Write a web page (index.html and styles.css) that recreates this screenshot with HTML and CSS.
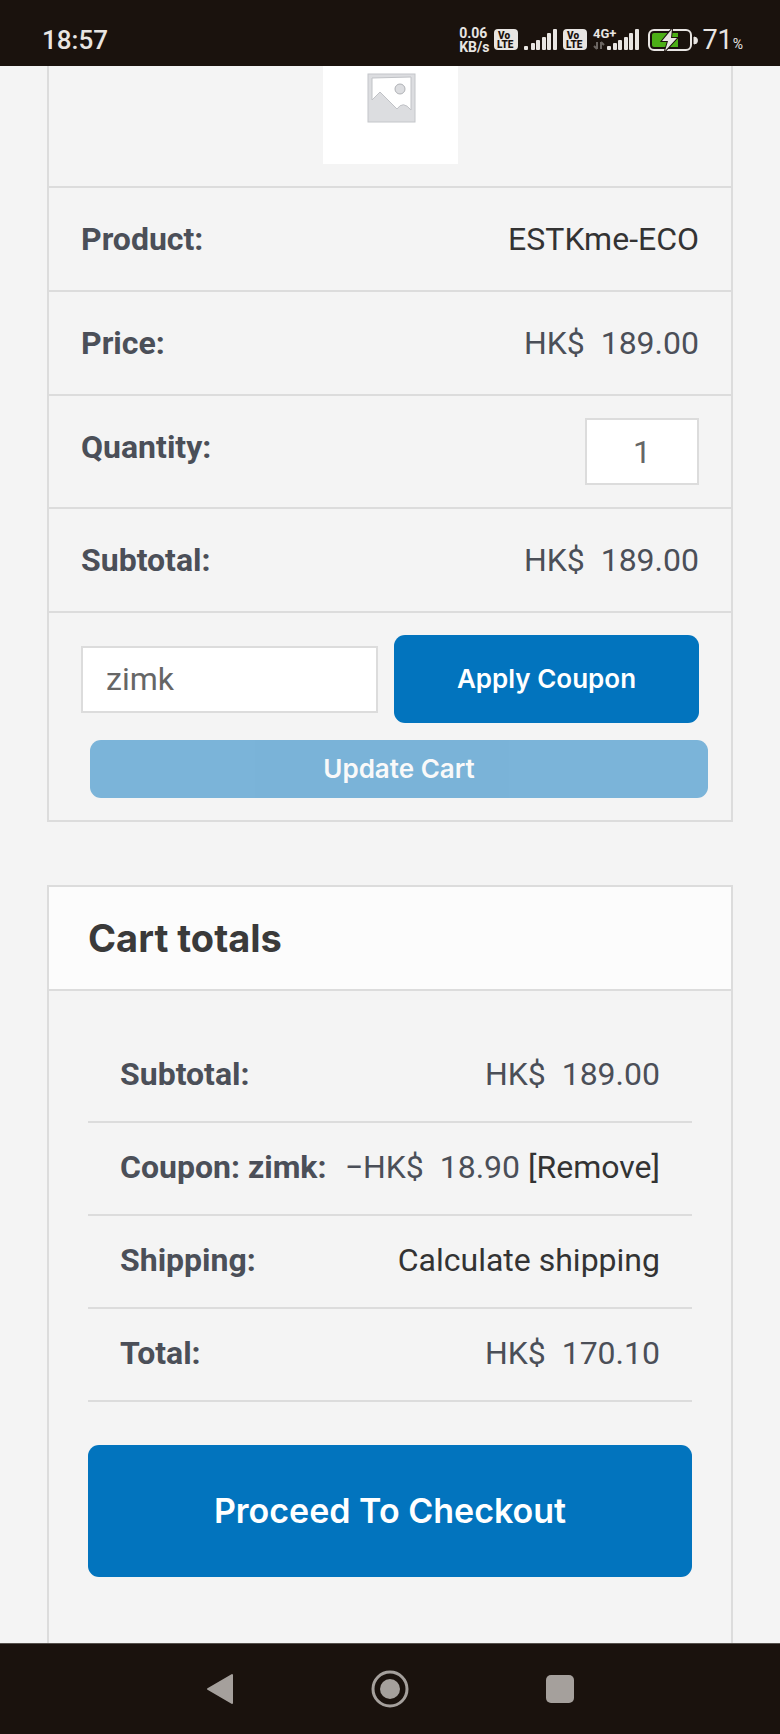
FILE: index.html
```html
<!DOCTYPE html>
<html lang="en">
  <head>
    <meta charset="UTF-8" />
    <meta name="viewport" content="width=device-width, initial-scale=1.0" />
    <title>Cart</title>
    <link rel="stylesheet" href="styles.css">
  </head>
  <body>
    <header class="status-bar">
      <span class="clock">18:57</span>
      <div class="status-icons">
        <div class="net-speed">0.06<br />KB/s</div>
        <svg class="volte" width="25" height="22" viewBox="0 0 25 22">
          <rect x="0" y="0" width="24" height="21" rx="4" fill="#e8e5e2" />
          <text x="4" y="10">Vo</text>
          <text x="3" y="19">LTE</text>
        </svg>
        <svg class="signal" width="34" height="22" viewBox="0 0 34 22" fill="#e8e5e2">
          <rect x="0" y="17" width="4" height="4" rx="1" />
          <rect x="7" y="14" width="4" height="7" rx="1" />
          <rect x="12" y="11" width="4" height="10" rx="1" />
          <rect x="18" y="8" width="4" height="13" rx="1" />
          <rect x="23" y="4" width="4" height="17" rx="1" />
          <rect x="29" y="0" width="4" height="21" rx="1" />
        </svg>
        <svg class="volte" width="25" height="22" viewBox="0 0 25 22">
          <rect x="0" y="0" width="24" height="21" rx="4" fill="#e8e5e2" />
          <text x="4" y="10">Vo</text>
          <text x="3" y="19">LTE</text>
        </svg>
        <svg class="mobile" width="47" height="22" viewBox="0 0 47 22" fill="#e8e5e2">
          <text x="0" y="9">4G+</text>
          <path d="M4 13v7M4 20l-3-3M8 20v-7M8 13l3 3" fill="none" stroke="#6b6561" stroke-width="2" />
          <rect x="14" y="17" width="4" height="4" rx="1" />
          <rect x="20" y="14" width="4" height="7" rx="1" />
          <rect x="25" y="11" width="4" height="10" rx="1" />
          <rect x="31" y="8" width="4" height="13" rx="1" />
          <rect x="36" y="4" width="4" height="17" rx="1" />
          <rect x="42" y="0" width="4" height="21" rx="1" />
        </svg>
        <svg class="battery" width="49" height="22" viewBox="0 0 49 22">
          <rect x="1" y="1" width="42" height="20" rx="5" fill="none" stroke="#e8e5e2" stroke-width="2" />
          <path d="M6 4h24v14H6a2 2 0 0 1-2-2V6a2 2 0 0 1 2-2z" fill="#4caf16" />
          <path d="M46 8a3 3 0 0 1 0 7z" fill="#e8e5e2" stroke="#e8e5e2" />
          <path d="M24 0L14 12h6l-3 10 12-13h-6z" fill="#e8e5e2" stroke="#1a120d" stroke-width="2" paint-order="stroke" />
        </svg>
        <span class="level">71<small>%</small></span>
      </div>
    </header>

    <main class="page">
      <form class="cart-box">
        <table class="cart-table">
          <tr>
            <td class="thumbnail" colspan="2">
              <svg width="135" height="98" viewBox="0 0 135 98">
                <rect width="135" height="98" fill="#fff" />
                <rect x="45" y="8" width="47" height="48" fill="#dcdde0" stroke="#c4c6ca" />
                <path d="M49 12l39-1v33q-8-10-14-1L57 26l-8 8z" fill="#fff" stroke="#c0c2c6" />
                <circle cx="77" cy="23" r="5" fill="#dcdde0" stroke="#b0b2b6" />
              </svg>
            </td>
          </tr>
          <tr>
            <th>Product:</th>
            <td><a href="#">ESTKme-ECO</a></td>
          </tr>
          <tr>
            <th>Price:</th>
            <td>HK$&nbsp; 189.00</td>
          </tr>
          <tr>
            <th><label for="quantity">Quantity:</label></th>
            <td><input class="qty" id="quantity" type="text" inputmode="numeric" value="1" /></td>
          </tr>
          <tr>
            <th>Subtotal:</th>
            <td>HK$&nbsp; 189.00</td>
          </tr>
          <tr>
            <td class="actions" colspan="2">
              <div class="coupon">
                <input class="coupon-code" type="text" aria-label="Coupon code" value="zimk" />
                <button class="btn" type="button">Apply Coupon</button>
              </div>
              <button class="btn update-cart" type="button" disabled>Update Cart</button>
            </td>
          </tr>
        </table>
      </form>

      <section class="cart-totals">
        <h2>Cart totals</h2>
        <div class="totals-body">
          <table class="totals-table">
            <tr>
              <th>Subtotal:</th>
              <td>HK$&nbsp; 189.00</td>
            </tr>
            <tr>
              <th>Coupon: zimk:</th>
              <td>−HK$&nbsp; 18.90 <a href="#">[Remove]</a></td>
            </tr>
            <tr>
              <th>Shipping:</th>
              <td><a href="#">Calculate shipping</a></td>
            </tr>
            <tr>
              <th>Total:</th>
              <td>HK$&nbsp; 170.10</td>
            </tr>
          </table>
          <a class="btn checkout" href="#">Proceed To Checkout</a>
        </div>
      </section>
    </main>

    <nav class="nav-bar">
      <button type="button" aria-label="Back">
        <svg width="40" height="40" viewBox="0 0 40 40">
          <path d="M8 20L32 6v28z" fill="#a5a09c" stroke="#a5a09c" stroke-width="2" stroke-linejoin="round" />
        </svg>
      </button>
      <button type="button" aria-label="Home">
        <svg width="40" height="40" viewBox="0 0 40 40">
          <circle cx="20" cy="20" r="17" fill="none" stroke="#a5a09c" stroke-width="3" />
          <circle cx="20" cy="20" r="10" fill="#a5a09c" />
        </svg>
      </button>
      <button type="button" aria-label="Recent apps">
        <svg width="40" height="40" viewBox="0 0 40 40">
          <rect x="6" y="6" width="28" height="28" rx="5" fill="#a5a09c" />
        </svg>
      </button>
    </nav>
  </body>
</html>
```

FILE: styles.css
```css
* {
  box-sizing: border-box;
}
body {
  margin: 0;
  min-height: 100vh;
  display: flex;
  flex-direction: column;
  background-color: #f4f4f4;
  color: #4b4f58;
  font-family: Roboto, "Liberation Sans", sans-serif;
  font-size: 32px;
}
a {
  color: #333;
  text-decoration: none;
}
svg {
  display: block;
  overflow: visible;
}

/* phone status bar */
.status-bar {
  height: 66px;
  padding: 14px 37px 0 42px;
  display: flex;
  justify-content: space-between;
  align-items: center;
  background-color: #1a120d;
  color: #e8e5e2;
}
.clock {
  font-size: 26px;
  font-weight: 500;
}
.status-icons {
  display: flex;
  align-items: center;
  gap: 5px;
}
.net-speed {
  font-size: 14px;
  line-height: 14px;
  font-weight: 700;
}
.volte text {
  font-size: 10px;
  font-weight: 900;
  fill: #1a120d;
}
.mobile text {
  font-size: 13px;
  font-weight: 700;
}
.battery {
  margin-left: 3px;
}
.level {
  font-size: 27px;
}
.level small {
  font-size: 14px;
}

/* cart */
.page {
  flex: 1;
  display: flex;
  flex-direction: column;
  gap: 63px;
  padding: 0 47px;
}
.cart-box {
  border: 2px solid #dcdcdc;
  border-top: none;
}
table {
  width: 100%;
  border-spacing: 0;
}
th,
td {
  border-bottom: 2px solid #dcdcdc;
  line-height: 58px;
  text-align: right;
  vertical-align: top;
}
th {
  font-weight: 700;
  text-align: left;
}
.cart-table th,
.cart-table td {
  padding: 22px 32px;
}
.cart-table .thumbnail {
  padding-top: 0;
}
.thumbnail svg {
  margin: 0 auto;
}
.cart-table .actions {
  border-bottom: none;
}
input {
  display: block;
  height: 67px;
  border: 2px solid #dcdcdc;
  border-radius: 0;
  background-color: #fff;
  color: #666;
  font-family: inherit;
  font-size: 32px;
}
.qty {
  width: 114px;
  margin-left: auto;
  text-align: center;
}
.coupon {
  display: grid;
  grid-template-columns: 297fr 305fr;
  align-items: center;
  gap: 16px;
}
.coupon-code {
  width: 100%;
  padding: 0 23px;
}
.btn {
  padding: 28px 16px;
  border: none;
  border-radius: 11px;
  background-color: #0274be;
  color: #fff;
  font-family: Inter, sans-serif;
  font-size: 26px;
  line-height: 32px;
  font-weight: 600;
  text-align: center;
}
.update-cart {
  display: block;
  width: 100%;
  margin: 17px 0 0 9px;
  padding: 13px 16px;
  opacity: 0.5;
}

/* totals */
.cart-totals {
  flex: 1;
  border: 2px solid #dcdcdc;
  border-bottom: none;
}
.cart-totals h2 {
  margin: 0;
  padding: 22px 39px;
  border-bottom: 2px solid #dcdcdc;
  background-color: #fcfcfc;
  color: #3a3a3a;
  font-family: Inter, sans-serif;
  font-size: 38px;
  line-height: 58px;
  font-weight: 700;
}
.totals-body {
  padding: 39px 39px 64px;
}
.totals-table th,
.totals-table td {
  padding: 15px 0 18px;
  white-space: nowrap;
}
.totals-table th {
  padding-left: 32px;
}
.totals-table td {
  padding-right: 32px;
}
.checkout {
  display: block;
  margin-top: 43px;
  padding: 42px 16px;
  font-size: 34px;
  line-height: 48px;
}

/* phone navigation bar */
.nav-bar {
  height: 91px;
  display: flex;
  justify-content: center;
  align-items: center;
  gap: 130px;
  border-top: 1px solid #55504c;
  background-color: #1a120d;
}
.nav-bar button {
  padding: 0;
  border: none;
  background: none;
}
```
